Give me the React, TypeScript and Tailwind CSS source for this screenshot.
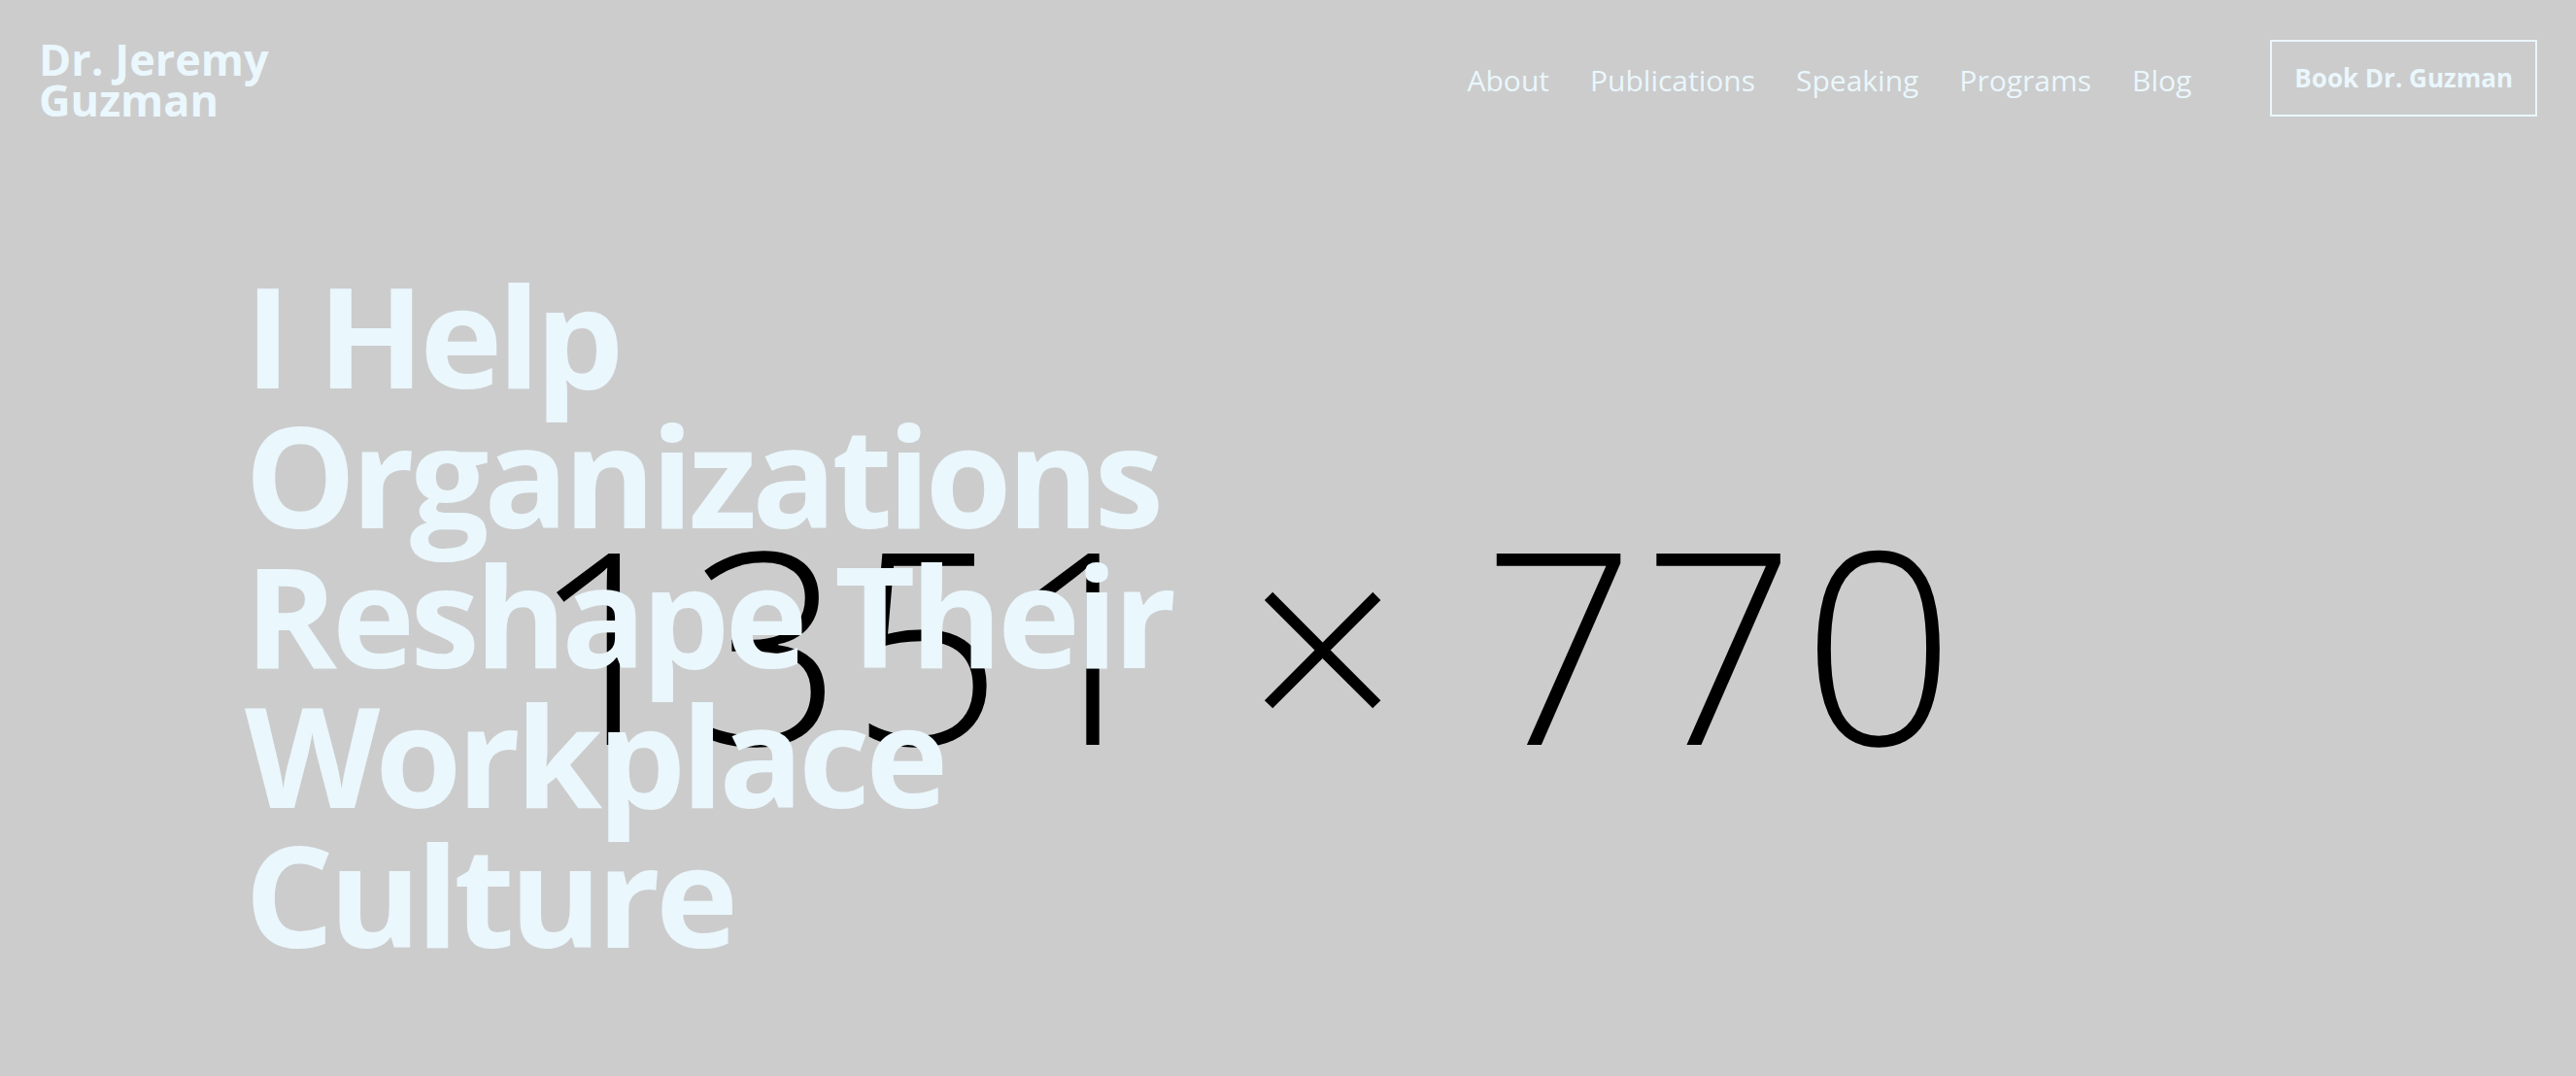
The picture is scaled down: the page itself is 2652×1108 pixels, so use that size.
export default function App() {
  const links = ['About', 'Publications', 'Speaking', 'Programs', 'Blog'];

  return (
    <div className="relative h-[1108px] overflow-hidden bg-[#cccccc] font-['Open_Sans','Noto_Sans',sans-serif] text-[#eaf7fd]">
      {/* placeholder picture behind the hero */}
      <div className="absolute inset-0 flex items-center justify-center pt-[212px] pr-[86px]">
        <span className="text-[276px] font-light leading-none tracking-[7px] text-black whitespace-nowrap">
          1351 × 770
        </span>
      </div>

      <header className="relative z-10 flex items-center justify-between px-10 pt-[37px]">
        <a href="#" className="pt-[3px] text-[45px] font-bold leading-[42px]">
          Dr. Jeremy
          <br />
          Guzman
        </a>
        <nav className="flex items-center">
          <ul className="flex items-center gap-[42px] pt-[4px] text-[30px] font-normal">
            {links.map((l) => (
              <li key={l}>
                <a href="#">{l}</a>
              </li>
            ))}
          </ul>
          <a
            href="#"
            className="ml-[81px] flex h-[79px] items-center border-2 border-[#eaf7fd] px-[23px] text-[26px] font-bold"
          >
            Book Dr. Guzman
          </a>
        </nav>
      </header>

      <section className="relative z-10 pl-[252px] pt-[148px]">
        <h1 className="text-[144px] font-bold leading-none tracking-[-5px]">
          I Help
          <br />
          Organizations
          <br />
          Reshape Their
          <br />
          Workplace
          <br />
          Culture
        </h1>
      </section>
    </div>
  );
}
